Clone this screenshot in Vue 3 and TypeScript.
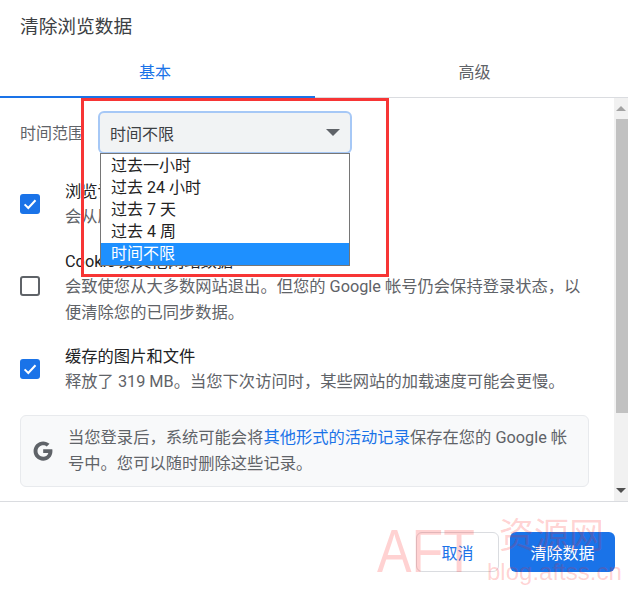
<template>
  <div class="dialog">
    <div class="title">清除浏览数据</div>
    <div class="tabs">
      <div class="tab active">基本</div>
      <div class="tab">高级</div>
    </div>
    <div class="body">
      <div class="content">
        <div class="range-row">
          <span class="range-label">时间范围</span>
          <div class="select-wrap">
            <div class="select">
              <span>时间不限</span>
              <span class="caret"></span>
            </div>
            <ul class="options">
              <li
                v-for="opt in options"
                :key="opt"
                :class="{ selected: opt === current }"
              >
                {{ opt }}
              </li>
            </ul>
          </div>
        </div>
        <div v-for="row in rows" :key="row.title" class="row">
          <div class="check" :class="{ on: row.checked }">
            <svg v-if="row.checked" width="20" height="20" viewBox="0 0 20 20">
              <path d="M4.6 10.4l3.7 3.6 7.2-7.8" fill="none" stroke="#fff" stroke-width="2" />
            </svg>
          </div>
          <div class="row-text">
            <div class="row-title">{{ row.title }}</div>
            <div class="row-desc">{{ row.desc }}</div>
          </div>
        </div>
        <div class="info">
          <svg class="g-icon" width="22" height="22" viewBox="0 0 24 24">
            <path
              fill="#5f6368"
              d="M12.2 10.2v4h5.6c-.5 2.5-2.7 4-5.6 4-3.4 0-6.200-2.800-6.200-6.200s2.800-6.200 6.200-6.200c1.500 0 2.900.5 3.900 1.400l3-3C17.300 2.500 14.900 1.500 12.200 1.500 6.400 1.500 1.700 6.200 1.700 12s4.700 10.500 10.500 10.500c5.300 0 10.100-3.800 10.100-10.500 0-.6-.1-1.200-.2-1.800H12.200z"
            />
          </svg>
          <div class="info-text">
            当您登录后，系统可能会将<span class="link">其他形式的活动记录</span>保存在您的 Google 帐号中。您可以随时删除这些记录。
          </div>
        </div>
      </div>
      <div class="scrollbar">
        <span class="arrow up"></span>
        <div class="thumb"></div>
        <span class="arrow down"></span>
      </div>
    </div>
    <div class="footer">
      <button class="btn cancel">取消</button>
      <button class="btn primary">清除数据</button>
    </div>

    <div class="red-box"></div>
    <div class="wm wm-aft">AFT</div>
    <div class="wm wm-cn">资源网</div>
    <div class="wm wm-url">blog.aftss.cn</div>
  </div>
</template>

<script setup lang="ts">
const options: string[] = ["过去一小时", "过去 24 小时", "过去 7 天", "过去 4 周", "时间不限"];
const current = "时间不限";

interface Row {
  title: string;
  desc: string;
  checked: boolean;
}

const rows: Row[] = [
  { title: "浏览记录", desc: "会从历史记录中删除 2 项内容", checked: true },
  {
    title: "Cookie 及其他网站数据",
    desc: "会致使您从大多数网站退出。但您的 Google 帐号仍会保持登录状态，以便清除您的已同步数据。",
    checked: false,
  },
  { title: "缓存的图片和文件", desc: "释放了 319 MB。当您下次访问时，某些网站的加载速度可能会更慢。", checked: true },
];
</script>

<style>
html,
body {
  margin: 0;
  background: #fff;
}
</style>

<style scoped>
.dialog {
  position: relative;
  width: 628px;
  height: 589px;
  overflow: hidden;
  background: #fff;
  font-family: Roboto, "Noto Sans CJK SC", sans-serif;
  color: #5f6368;
}

.title {
  height: 54px;
  padding: 15px 0 0 20px;
  box-sizing: border-box;
  font-size: 18.7px;
  line-height: 24px;
  color: #3c4043;
}

.tabs {
  display: flex;
  height: 44px;
  box-sizing: border-box;
  border-bottom: 1px solid #dadce0;
}

.tab {
  flex: none;
  height: 44px;
  box-sizing: border-box;
  text-align: center;
  font-size: 16px;
  line-height: 37px;
  width: 313px;
  padding-left: 6px;
}

.tab.active {
  width: 315px;
  padding: 0 5px 0 0;
  color: #1a73e8;
  border-bottom: 2px solid #1a73e8;
}

.body {
  display: flex;
  height: 403px;
}

.content {
  flex: 1;
  min-width: 0;
  padding: 0 25px 0 20px;
}

.range-row {
  display: flex;
  height: 82px;
  padding-top: 13px;
  box-sizing: border-box;
}

.range-label {
  width: 78px;
  font-size: 16px;
  line-height: 46px;
  white-space: nowrap;
}

.select-wrap {
  position: relative;
  width: 254px;
}

.select {
  display: flex;
  align-items: center;
  justify-content: space-between;
  height: 43px;
  box-sizing: border-box;
  padding: 0 10px;
  background: #f1f3f4;
  border: 2px solid #a6c8f6;
  border-radius: 6px;
  font-size: 16px;
  color: #3c4043;
}

.caret {
  width: 0;
  height: 0;
  border-left: 7px solid transparent;
  border-right: 7px solid transparent;
  border-top: 7px solid #5f6368;
}

.options {
  position: absolute;
  z-index: 2;
  top: 42px;
  left: 2px;
  width: 250px;
  box-sizing: border-box;
  margin: 0;
  padding: 1px 0 0;
  list-style: none;
  background: #fff;
  border: 1px solid #767676;
  font-size: 16px;
  color: #222;
}

.options li {
  height: 22px;
  line-height: 22px;
  padding-left: 10px;
}

.options li.selected {
  background: #1e90ff;
  color: #fff;
}

.row {
  display: flex;
  align-items: center;
  margin-bottom: 19.5px;
}

.check {
  flex: none;
  width: 20px;
  height: 20px;
  box-sizing: border-box;
  border: 2px solid #5f6368;
  border-radius: 3px;
  margin-top: -4px;
  margin-right: 25px;
}

.check.on {
  background: #1a73e8;
  border: 0;
  margin-top: -2px;
}

.check svg {
  display: block;
}

.row-title {
  font-size: 16.3px;
  line-height: 24px;
  color: #202124;
}

.row-desc {
  font-size: 16.3px;
  line-height: 26px;
  color: #5f6368;
}

.info {
  display: flex;
  align-items: center;
  height: 72px;
  box-sizing: border-box;
  margin-top: 5.5px;
  padding: 0 20px 0 11px;
  background: #f8f9fa;
  border: 1px solid #e8eaed;
  border-radius: 6px;
}

.g-icon {
  flex: none;
  margin-right: 14px;
}

.info-text {
  font-size: 16.3px;
  line-height: 26px;
}

.link {
  color: #1a73e8;
}

.scrollbar {
  position: relative;
  flex: none;
  width: 14px;
  background: #f1f1f1;
}

.thumb {
  position: absolute;
  top: 21px;
  left: 2px;
  right: 0;
  height: 294px;
  background: #c1c1c1;
}

.arrow {
  position: absolute;
  left: 2px;
  width: 0;
  height: 0;
  border-left: 5px solid transparent;
  border-right: 5px solid transparent;
}

.arrow.up {
  top: 8px;
  border-bottom: 5px solid #a3a3a3;
}

.arrow.down {
  bottom: 8px;
  border-top: 5px solid #505050;
}

.footer {
  display: flex;
  justify-content: flex-end;
  gap: 11px;
  height: 88px;
  box-sizing: border-box;
  padding: 30px 13px 0 0;
  border-top: 1px solid #dadce0;
}

.btn {
  height: 40px;
  box-sizing: border-box;
  border-radius: 6px;
  font-family: inherit;
  font-size: 16px;
  padding: 0;
}

.cancel {
  width: 83px;
  background: #fff;
  border: 1px solid #dadce0;
  color: #1a73e8;
}

.primary {
  width: 105px;
  background: #1a73e8;
  border: 0;
  color: #fff;
}

.red-box {
  position: absolute;
  z-index: 3;
  left: 81px;
  top: 98px;
  width: 308px;
  height: 179px;
  box-sizing: border-box;
  border: 3px solid #f73535;
  pointer-events: none;
}

.wm {
  position: absolute;
  z-index: 4;
  color: rgba(255, 30, 30, 0.2);
  white-space: nowrap;
  pointer-events: none;
}

.wm-aft {
  left: 377px;
  top: 516px;
  font-family: "Liberation Sans", sans-serif;
  font-size: 61px;
  line-height: 70px;
  transform: scaleX(0.85);
  transform-origin: left center;
}

.wm-cn {
  left: 499px;
  top: 515px;
  font-size: 35px;
  line-height: 44px;
}

.wm-url {
  left: 487px;
  top: 558px;
  font-family: "Liberation Sans", sans-serif;
  font-size: 24px;
  line-height: 28px;
}
</style>
